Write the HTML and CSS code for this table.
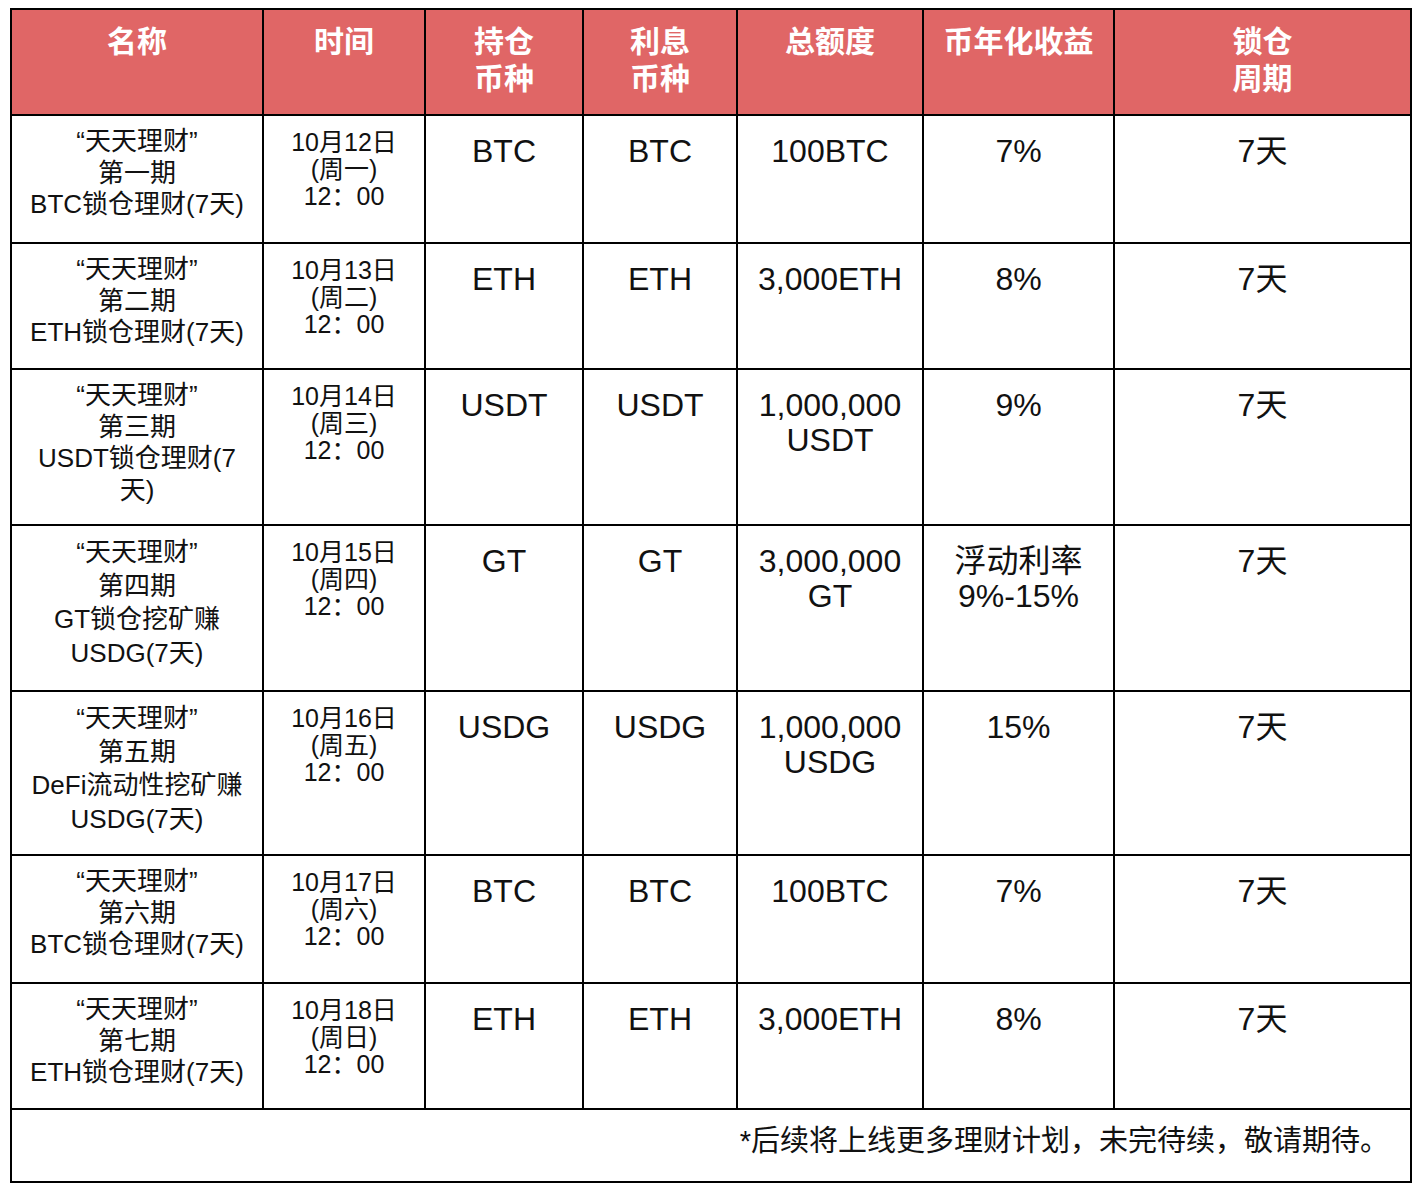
FILE: index.html
```html
<!DOCTYPE html>
<html lang="zh-CN">
<head>
<meta charset="utf-8">
<title>天天理财</title>
<link rel="stylesheet" href="styles.css">
</head>
<body>
<table class="plan">
  <colgroup>
    <col class="c-name"><col class="c-time"><col class="c-hold"><col class="c-int"><col class="c-total"><col class="c-rate"><col class="c-lock">
  </colgroup>
  <thead>
    <tr class="head">
      <th>名称</th>
      <th>时间</th>
      <th>持仓<br>币种</th>
      <th>利息<br>币种</th>
      <th>总额度</th>
      <th>币年化收益</th>
      <th>锁仓<br>周期</th>
    </tr>
  </thead>
  <tbody>
    <tr class="r3">
      <td class="name">“天天理财”<br>第一期<br>BTC锁仓理财(7天)</td>
      <td class="time">10月12日<br>(周一)<br>12：00</td>
      <td class="big">BTC</td>
      <td class="big">BTC</td>
      <td class="big">100BTC</td>
      <td class="big">7%</td>
      <td class="big">7天</td>
    </tr>
    <tr class="r3b">
      <td class="name">“天天理财”<br>第二期<br>ETH锁仓理财(7天)</td>
      <td class="time">10月13日<br>(周二)<br>12：00</td>
      <td class="big">ETH</td>
      <td class="big">ETH</td>
      <td class="big">3,000ETH</td>
      <td class="big">8%</td>
      <td class="big">7天</td>
    </tr>
    <tr class="r4">
      <td class="name">“天天理财”<br>第三期<br>USDT锁仓理财(7<br>天)</td>
      <td class="time">10月14日<br>(周三)<br>12：00</td>
      <td class="big">USDT</td>
      <td class="big">USDT</td>
      <td class="big">1,000,000<br>USDT</td>
      <td class="big">9%</td>
      <td class="big">7天</td>
    </tr>
    <tr class="r4x">
      <td class="name wide">“天天理财”<br>第四期<br>GT锁仓挖矿赚<br>USDG(7天)</td>
      <td class="time">10月15日<br>(周四)<br>12：00</td>
      <td class="big">GT</td>
      <td class="big">GT</td>
      <td class="big">3,000,000<br>GT</td>
      <td class="big">浮动利率<br>9%-15%</td>
      <td class="big">7天</td>
    </tr>
    <tr class="r4y">
      <td class="name wide">“天天理财”<br>第五期<br>DeFi流动性挖矿赚<br>USDG(7天)</td>
      <td class="time">10月16日<br>(周五)<br>12：00</td>
      <td class="big">USDG</td>
      <td class="big">USDG</td>
      <td class="big">1,000,000<br>USDG</td>
      <td class="big">15%</td>
      <td class="big">7天</td>
    </tr>
    <tr class="r3c">
      <td class="name">“天天理财”<br>第六期<br>BTC锁仓理财(7天)</td>
      <td class="time">10月17日<br>(周六)<br>12：00</td>
      <td class="big">BTC</td>
      <td class="big">BTC</td>
      <td class="big">100BTC</td>
      <td class="big">7%</td>
      <td class="big">7天</td>
    </tr>
    <tr class="r3b">
      <td class="name">“天天理财”<br>第七期<br>ETH锁仓理财(7天)</td>
      <td class="time">10月18日<br>(周日)<br>12：00</td>
      <td class="big">ETH</td>
      <td class="big">ETH</td>
      <td class="big">3,000ETH</td>
      <td class="big">8%</td>
      <td class="big">7天</td>
    </tr>
    <tr class="foot">
      <td class="note" colspan="7">*后续将上线更多理财计划，未完待续，敬请期待。</td>
    </tr>
  </tbody>
</table>
</body>
</html>
```

FILE: styles.css
```css
html, body {
  margin: 0;
  padding: 0;
  background: #ffffff;
}

body {
  font-family: "Liberation Sans", Arial, "Noto Sans CJK SC", sans-serif;
  color: #111111;
}

.plan {
  margin: 8px 0 0 10px;
  width: 1400px;
  table-layout: fixed;
  border-collapse: collapse;
}

.c-name  { width: 252px; }
.c-time  { width: 162px; }
.c-hold  { width: 158px; }
.c-int   { width: 154px; }
.c-total { width: 186px; }
.c-rate  { width: 191px; }
.c-lock  { width: 297px; }

.plan th,
.plan td {
  border: 2px solid #000000;
  padding: 0;
  text-align: center;
  vertical-align: top;
  white-space: nowrap;
}

.head { height: 106px; }

.plan th {
  background: #e06666;
  color: #ffffff;
  font-family: "Noto Sans CJK SC", sans-serif;
  font-weight: 700;
  font-size: 30px;
  line-height: 37px;
  padding-top: 11px;
}

.r3  { height: 128px; }
.r3b { height: 126px; }
.r3c { height: 128px; }
.r4  { height: 156px; }
.r4x { height: 166px; }
.r4y { height: 164px; }
.foot { height: 73px; }

.name {
  font-size: 26px;
  line-height: 31.5px;
  padding-top: 10px !important;
}

.name.wide {
  line-height: 33.5px;
}

.time {
  font-size: 25px;
  line-height: 27px;
  padding-top: 13px !important;
}

.big {
  font-size: 32px;
  line-height: 35px;
  padding-top: 18px !important;
}

.note {
  font-size: 29px;
  line-height: 34px;
  text-align: right !important;
  vertical-align: middle !important;
  padding-right: 21px !important;
  padding-bottom: 10px !important;
}
```
